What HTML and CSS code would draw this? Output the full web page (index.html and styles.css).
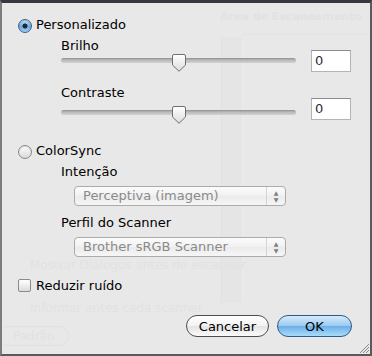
FILE: index.html
```html
<!DOCTYPE html>
<html lang="pt">
<head>
  <meta charset="UTF-8" />
  <title>Ajustes de imagem</title>
  <link rel="stylesheet" href="styles.css">
</head>
<body>
  <div class="sheet">
    <!-- faint window content showing through the sheet -->
    <div class="ghost" aria-hidden="true">
      <div class="ghost-title">Área de Escaneamento</div>
      <div class="ghost-rule"></div>
      <div class="ghost-band"></div>
      <div class="ghost-line g1">Mostrar Diálogos antes de escanear</div>
      <div class="ghost-line g2">Informar antes cada scanner</div>
      <div class="ghost-btn">Padrão</div>
    </div>

    <div class="content">
      <div class="option">
        <span class="radio on"></span>
        <span>Personalizado</span>
      </div>

      <div class="control">
        <span class="control-label">Brilho</span>
        <div class="slider">
          <div class="track"></div>
          <svg class="thumb" width="14" height="18" viewBox="0 0 14 18">
            <defs>
              <linearGradient id="tg1" x1="0" y1="0" x2="0" y2="1">
                <stop offset="0" stop-color="#ffffff"/>
                <stop offset="1" stop-color="#dcdcdc"/>
              </linearGradient>
            </defs>
            <path d="M0.5 2 Q0.5 0.5 2 0.5 H12 Q13.5 0.5 13.5 2 V11 L7 17.3 L0.5 11 Z" fill="url(#tg1)" stroke="#6f6f6f"/>
          </svg>
        </div>
        <div class="field">0</div>
      </div>

      <div class="control control-low">
        <span class="control-label">Contraste</span>
        <div class="slider">
          <div class="track"></div>
          <svg class="thumb" width="14" height="18" viewBox="0 0 14 18">
            <path d="M0.5 2 Q0.5 0.5 2 0.5 H12 Q13.5 0.5 13.5 2 V11 L7 17.3 L0.5 11 Z" fill="url(#tg1)" stroke="#6f6f6f"/>
          </svg>
        </div>
        <div class="field">0</div>
      </div>

      <div class="option option-sync">
        <span class="radio"></span>
        <span>ColorSync</span>
      </div>

      <div class="group">
        <span class="control-label">Intenção</span>
        <div class="popup">
          <span class="popup-text">Perceptiva (imagem)</span>
          <span class="popup-arrows">▲<br>▼</span>
        </div>
        <span class="control-label label-gap">Perfil do Scanner</span>
        <div class="popup">
          <span class="popup-text">Brother sRGB Scanner</span>
          <span class="popup-arrows">▲<br>▼</span>
        </div>
      </div>

      <div class="option option-check">
        <span class="checkbox"></span>
        <span>Reduzir ruído</span>
      </div>

      <div class="buttons">
        <button class="btn">Cancelar</button>
        <button class="btn btn-default">OK</button>
      </div>
    </div>

    <svg class="grip" width="12" height="12" viewBox="0 0 12 12">
      <path d="M11 2 L2 11 M11 5 L5 11 M11 8 L8 11" stroke="#8a8a8a" stroke-width="1"/>
    </svg>
  </div>
</body>
</html>
```

FILE: styles.css
```css
body {
  margin: 0;
  font-family: "DejaVu Sans", "Liberation Sans", sans-serif;
  font-size: 13px;
  color: #000;
  background: #3a3640;
}
.sheet {
  position: relative;
  width: 372px;
  height: 356px;
  box-sizing: border-box;
  border-top: 3px solid #3a3640;
  border-left: 2px solid #7c7c7c;
  border-right: 2px solid #5a5a5a;
  border-bottom: 2px solid #5a5a5a;
  background: #e8e8e8;
  overflow: hidden;
}

/* ghosted window behind */
.ghost {
  position: absolute;
  inset: 0;
  color: #e2e2e2;
  font-size: 12px;
  white-space: nowrap;
}
.ghost-title {
  position: absolute;
  left: 218px;
  top: 7px;
  font-size: 11px;
  font-weight: bold;
}
.ghost-rule {
  position: absolute;
  left: 241px;
  right: 0;
  top: 31px;
  border-top: 1px dotted #e0e0e0;
}
.ghost-band {
  position: absolute;
  left: 219px;
  top: 34px;
  width: 20px;
  height: 266px;
  background: #e5e5e5;
  border-left: 1px solid #e2e2e2;
  border-right: 1px solid #ececec;
}
.ghost-line {
  position: absolute;
  left: 28px;
}
.g1 { top: 255px; }
.g2 { top: 298px; }
.ghost-btn {
  position: absolute;
  left: -4px;
  top: 323px;
  padding: 2px 14px;
  border: 1px solid #e0e0e0;
  border-radius: 10px;
}

.content {
  position: relative;
  display: flex;
  flex-direction: column;
  padding: 14px 18px 0 16px;
}

/* radio / checkbox rows */
.option {
  display: flex;
  align-items: flex-start;
  gap: 4px;
  line-height: 16px;
  height: 16px;
}
.option-sync { margin-top: 19px; }
.option-check { margin-top: 21px; gap: 5px; }
.radio {
  width: 14px;
  height: 14px;
  margin-top: 2px;
  box-sizing: border-box;
  border-radius: 50%;
  border: 1px solid #8a8a8a;
  background: linear-gradient(#ffffff, #d8d8d8);
  box-shadow: inset 0 1px 1px rgba(0,0,0,0.15);
}
.radio.on {
  border-color: #3d5f86;
  background:
    radial-gradient(circle, #1e2a36 0 2.2px, transparent 2.8px),
    linear-gradient(#c9e2f7, #6ca7df 55%, #9fd0f5);
}
.checkbox {
  width: 13px;
  height: 13px;
  margin-top: 1px;
  box-sizing: border-box;
  border: 1px solid #8a8a8a;
  border-radius: 2px;
  background: linear-gradient(#ffffff, #dcdcdc);
}

/* sliders with value fields */
.control {
  display: grid;
  grid-template-columns: 235px 40px;
  column-gap: 15px;
  margin: 5px 0 0 43px;
}
.control-low { margin-top: 13px; }
.control-label {
  grid-column: 1;
  line-height: 16px;
}
.slider {
  grid-column: 1;
  grid-row: 2;
  position: relative;
  height: 18px;
}
.control-low .slider { margin-top: 5px; }
.track {
  margin-top: 4px;
  height: 5px;
  border-radius: 3px;
  background: linear-gradient(#8f8f8f, #b9b9b9 40%, #d2d2d2);
}
.thumb {
  position: absolute;
  left: calc(50% - 7px);
  top: 0;
}
.field {
  grid-column: 2;
  grid-row: 1 / 3;
  align-self: end;
  height: 22px;
  box-sizing: border-box;
  padding-left: 3px;
  line-height: 20px;
  background: #fff;
  border: 1px solid #b4b4b4;
  border-top-color: #8c8c8c;
  color: #2a3038;
}
.control-low .field { margin-bottom: 4px; }

/* pop-up menus */
.group {
  display: flex;
  flex-direction: column;
  margin: 5px 0 0 43px;
}
.label-gap { margin-top: 9px; }
.popup {
  display: flex;
  margin: 6px 0 0 13px;
  width: 212px;
  height: 20px;
  box-sizing: border-box;
  border: 1px solid #ababab;
  border-radius: 4px;
  background: linear-gradient(#fbfbfb, #f1f1f1 50%, #ebebeb 51%, #f6f6f6);
  color: #8a8a8a;
  line-height: 18px;
}
.popup-text {
  flex: 1;
  padding-left: 8px;
}
.popup-arrows {
  width: 18px;
  border-left: 1px solid #d4d4d4;
  font-size: 6px;
  line-height: 7px;
  text-align: center;
  padding-top: 2px;
  color: #7d7d7d;
}

/* buttons */
.buttons {
  display: flex;
  justify-content: flex-end;
  gap: 8px;
  margin-top: 21px;
}
.btn {
  height: 22px;
  padding: 0;
  font-family: inherit;
  font-size: 13px;
  color: #000;
  border: 1px solid #4e4e4e;
  border-radius: 11px;
  background: linear-gradient(#ffffff, #f2f2f2 50%, #e4e4e4 51%, #fafafa);
  width: 83px;
}
.btn-default {
  width: 75px;
  border-color: #2c5b8c;
  background: linear-gradient(#d6ebfb, #9ccbf0 48%, #6cb0e8 52%, #a9dbfa);
}

.grip {
  position: absolute;
  right: 0;
  bottom: 0;
}
```
